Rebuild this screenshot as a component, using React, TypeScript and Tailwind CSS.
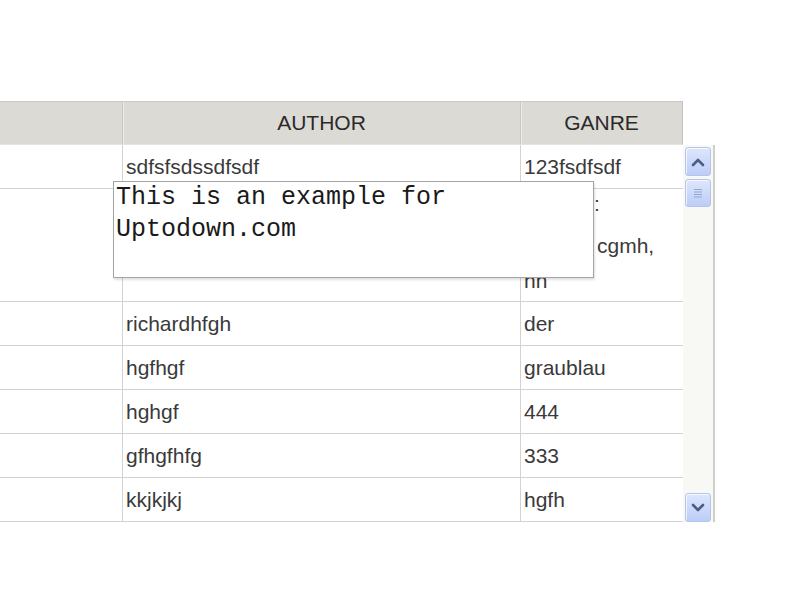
import React from "react";

const rows: { author: string; ganre: string; h: string }[] = [
  { author: "sdfsfsdssdfsdf", ganre: "123fsdfsdf", h: "h-[44px]" },
  { author: "", ganre: "", h: "h-[113px]" },
  { author: "richardhfgh", ganre: "der", h: "h-[44px]" },
  { author: "hgfhgf", ganre: "graublau", h: "h-[44px]" },
  { author: "hghgf", ganre: "444", h: "h-[44px]" },
  { author: "gfhgfhfg", ganre: "333", h: "h-[44px]" },
  { author: "kkjkjkj", ganre: "hgfh", h: "h-[44px]" },
];

function Btn({ children, cls }: { children?: React.ReactNode; cls: string }) {
  return (
    <div
      className={`${cls} w-[26px] ml-[2px] rounded-[3px] border border-[#b4c4ee] bg-gradient-to-b from-[#dde6fc] to-[#bccdf6] flex items-center justify-center shadow-[inset_1px_1px_0_rgba(255,255,255,0.7)]`}
    >
      {children}
    </div>
  );
}

export default function App() {
  return (
    <div
      className="w-[800px] h-[600px] bg-white relative overflow-hidden text-[#3a3a3a]"
      style={{ fontFamily: '"Liberation Sans", Arial, sans-serif' }}
    >
      <div className="pt-[101px]">
        {/* header */}
        <div className="flex w-[683px] h-[44px] bg-[#dcdad4] border-t border-[#cbc9c3] border-r border-r-[#c4c2bc] border-b border-b-[#e6e4df] text-[21px] text-[#2a2a2a]">
          <div className="w-[123px] border-r border-[#c9c7c1] shadow-[1px_0_0_#efede9]" />
          <div className="w-[398px] border-r border-[#c9c7c1] shadow-[1px_0_0_#efede9] flex items-center justify-center">
            AUTHOR
          </div>
          <div className="flex-1 flex items-center justify-center">GANRE</div>
        </div>
        {/* body */}
        <div className="flex">
          <div className="w-[683px] text-[21px] leading-[21px]">
            {rows.map((r, i) => (
              <div key={i} className={`flex ${r.h} border-b border-[#d3d3d3]`}>
                <div className="w-[123px] border-r border-[#d3d3d3]" />
                <div
                  className={`w-[398px] border-r border-[#d3d3d3] pl-[3px] flex ${i === 1 ? "items-start" : "items-center"}`}
                >
                  {r.author}
                </div>
                <div className="flex-1 pl-[3px] flex items-center">
                  {i === 1 ? (
                    <div className="self-start pt-[4px] whitespace-nowrap">
                      <div>
                        <span className="inline-block w-[70px] overflow-hidden align-bottom">fgdfg</span>:
                      </div>
                      <div>&nbsp;</div>
                      <div>
                        <span className="inline-block w-[73px] overflow-hidden align-bottom">dfgh</span>cgmh,
                      </div>
                      <div className="mt-[14px]">nn</div>
                    </div>
                  ) : (
                    r.ganre
                  )}
                </div>
              </div>
            ))}
          </div>
          {/* scrollbar */}
          <div className="w-[32px] h-[377px] bg-[#f8f8f4] border-r-2 border-[#cfcfcb] flex flex-col">
            <Btn cls="mt-[2px] h-[29px]">
              <svg width="14" height="10" viewBox="0 0 14 10">
                <path d="M2 8 L7 3 L12 8" fill="none" stroke="#4a5f88" strokeWidth="2.6" strokeLinecap="round" strokeLinejoin="round" />
              </svg>
            </Btn>
            <Btn cls="mt-[3px] h-[28px]">
              <svg width="12" height="12" viewBox="0 0 12 12">
                <path d="M2 2.5 H10 M2 5 H10 M2 7.5 H10 M2 10 H10" stroke="#93a8d8" strokeWidth="1" />
              </svg>
            </Btn>
            <div className="flex-1" />
            <Btn cls="mb-[0px] h-[29px]">
              <svg width="14" height="10" viewBox="0 0 14 10">
                <path d="M2 2 L7 7 L12 2" fill="none" stroke="#4a5f88" strokeWidth="2.6" strokeLinecap="round" strokeLinejoin="round" />
              </svg>
            </Btn>
          </div>
        </div>
      </div>
      {/* tooltip */}
      <div
        className="absolute left-[113px] top-[181px] w-[481px] h-[97px] bg-white border border-[#a4a4a4] shadow-[1px_2px_2px_rgba(0,0,0,0.12)] pl-[2px] text-[25px] leading-[32px] text-[#1a1a1a]"
        style={{ fontFamily: '"Liberation Mono", "Courier New", monospace' }}
      >
        <div>This is an example for</div>
        <div>Uptodown.com</div>
      </div>
    </div>
  );
}
